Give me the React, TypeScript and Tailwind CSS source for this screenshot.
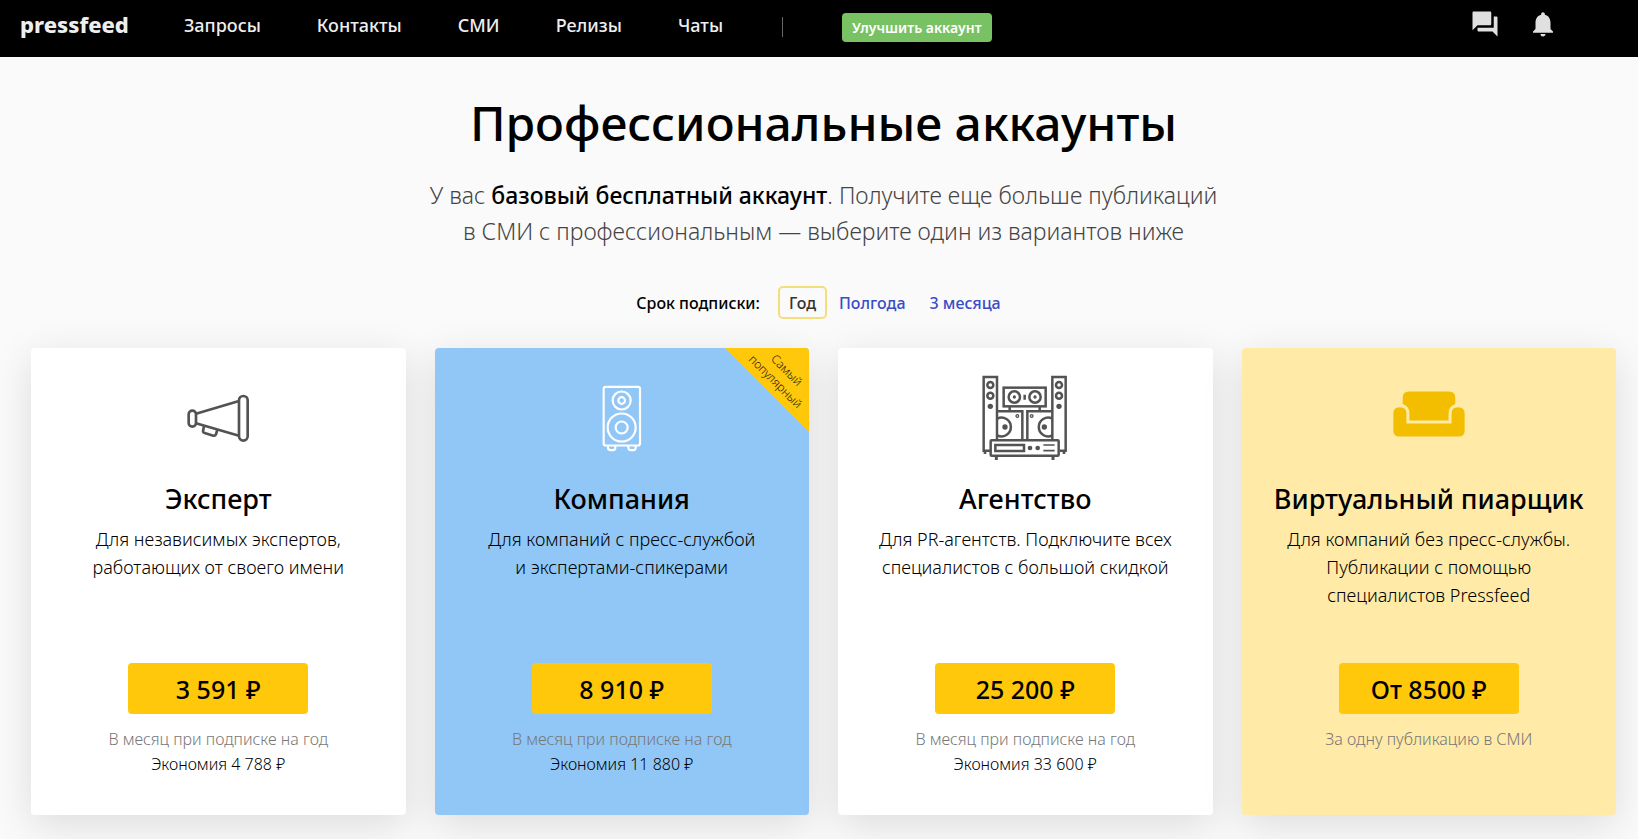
import type { ReactNode } from 'react';
import { MdForum, MdNotifications } from 'react-icons/md';

const navItems = ['Запросы', 'Контакты', 'СМИ', 'Релизы', 'Чаты'];

function MegaphoneIcon() {
  return (
    <svg viewBox="55 72 189 147" className="h-[49px] w-[63px]" fill="none" stroke="#535254" strokeWidth="8" strokeLinejoin="round" aria-hidden="true">
      <rect x="211" y="78" width="26" height="134" rx="13" />
      <rect x="60" y="122" width="22" height="48" rx="11" />
      <path d="M82 131 L211 93 M82 160 L211 197" />
      <path d="M106 168 L103 184 Q103 188 108 189 L134 197 Q140 198 142 193 L146 179" />
    </svg>
  );
}

function SpeakerIcon() {
  return (
    <svg viewBox="519 139 120 200" className="h-[67px] w-[40px]" fill="none" stroke="#ffffff" strokeWidth="6.5" aria-hidden="true">
      <rect x="524" y="144" width="109" height="176" rx="6" />
      <circle cx="578" cy="185" r="27" />
      <circle cx="578" cy="185" r="10" />
      <circle cx="578" cy="266" r="42" />
      <circle cx="578" cy="266" r="18" />
      <path d="M537 321 V326 Q537 334 545 334 H552 Q559 334 559 326 V321 M598 321 V326 Q598 334 606 334 H613 Q620 334 620 326 V321" />
    </svg>
  );
}

function StereoIcon() {
  return (
    <svg viewBox="37 33 258 258" className="h-[86px] w-[86px]" fill="none" stroke="#535254" strokeWidth="7.5" aria-hidden="true">
      <path d="M62 260 H42 V39 H82 V228 M270 260 H288 V39 H248 V228" />
      <path d="M46 262 V270 M283 262 V270" strokeWidth="8" />
      <circle cx="62" cy="63" r="9" />
      <circle cx="62" cy="95" r="9" />
      <circle cx="268" cy="63" r="9" />
      <circle cx="268" cy="95" r="9" />
      <rect x="102" y="71" width="126" height="56" />
      <circle cx="134" cy="99" r="17" />
      <circle cx="196" cy="99" r="17" />
      <path d="M165 92 V107 M120 128 V140 M210 128 V140" />
      <path d="M83 142 H158 V227 M248 142 H173 V227" />
      <path d="M83 164 A28 28 0 1 1 83 214 M248 164 A28 28 0 1 0 248 214" />
      <circle cx="143" cy="156" r="4" strokeWidth="4" />
      <circle cx="186" cy="156" r="4" strokeWidth="4" />
      <rect x="63" y="229" width="204" height="46" rx="3" />
      <rect x="77" y="243" width="86" height="18" />
      <path d="M221 243 H255 M221 260 H255" strokeWidth="5" />
      <path d="M80 277 V288 M250 277 V288" strokeWidth="9" />
      <g fill="#535254" stroke="none">
        <circle cx="62" cy="127" r="8" />
        <circle cx="268" cy="127" r="8" />
        <circle cx="134" cy="99" r="5" />
        <circle cx="196" cy="99" r="5" />
        <circle cx="106" cy="189" r="8" />
        <circle cx="224" cy="189" r="8" />
        <circle cx="181" cy="252" r="7" />
        <circle cx="204" cy="252" r="7" />
      </g>
    </svg>
  );
}

function SofaIcon() {
  return (
    <svg viewBox="68 65 215 137" className="mb-2 h-[46px] w-[72px]" fill="#f3be00" aria-hidden="true">
      <path d="M116 66 H235 Q254 66 254 85 V104 Q234 111 234 131 V153 H117 V131 Q117 111 97 104 V85 Q97 66 116 66 Z" />
      <path d="M69 132 Q69 113 88 113 Q108 113 108 132 V162 H243 V132 Q243 113 262 113 Q282 113 282 132 V183 Q282 201 264 201 H87 Q69 201 69 183 Z" />
    </svg>
  );
}

interface Plan {
  name: string;
  lines: string[];
  price: string;
  note: string;
  saving?: string;
  popular?: boolean;
  background: string;
  icon: ReactNode;
}

const plans: Plan[] = [
  {
    name: 'Эксперт',
    lines: ['Для независимых экспертов,', 'работающих от своего имени'],
    price: '3 591 ₽',
    note: 'В месяц при подписке на год',
    saving: 'Экономия 4 788 ₽',
    background: 'bg-white',
    icon: <MegaphoneIcon />,
  },
  {
    name: 'Компания',
    lines: ['Для компаний с пресс-службой', 'и экспертами-спикерами'],
    price: '8 910 ₽',
    note: 'В месяц при подписке на год',
    saving: 'Экономия 11 880 ₽',
    popular: true,
    background: 'bg-[#90c7f6]',
    icon: <SpeakerIcon />,
  },
  {
    name: 'Агентство',
    lines: ['Для PR-агентств. Подключите всех', 'специалистов с большой скидкой'],
    price: '25 200 ₽',
    note: 'В месяц при подписке на год',
    saving: 'Экономия 33 600 ₽',
    background: 'bg-white',
    icon: <StereoIcon />,
  },
  {
    name: 'Виртуальный пиарщик',
    lines: ['Для компаний без пресс-службы.', 'Публикации с помощью', 'специалистов Pressfeed'],
    price: 'От 8500 ₽',
    note: 'За одну публикацию в СМИ',
    background: 'bg-[#ffeaa7]',
    icon: <SofaIcon />,
  },
];

function PlanCard({ plan }: { plan: Plan }) {
  return (
    <article className={`relative flex flex-col items-center overflow-hidden rounded text-center shadow-[0_10px_40px_rgba(0,0,0,0.12)] ${plan.background}`}>
      {plan.popular && (
        <div className="absolute top-0 right-0 size-[84px] bg-[#ffc80a] [clip-path:polygon(0_0,100%_0,100%_100%)]">
          <p className="absolute top-3 left-4 w-20 rotate-45 text-xs leading-4 font-light text-[#222]">
            Самый
            <br />
            популярный
          </p>
        </div>
      )}
      <div className="mt-[22px] flex h-24 items-center justify-center">{plan.icon}</div>
      <h2 className="mt-[13px] text-[27px] leading-10 font-medium whitespace-nowrap">{plan.name}</h2>
      <p className="mt-[6px] min-h-28 text-lg leading-7 font-light whitespace-nowrap">
        {plan.lines.map((line) => (
          <span key={line} className="block">
            {line}
          </span>
        ))}
      </p>
      <button type="button" className="mt-[26px] h-[51px] w-[180px] rounded bg-[#ffc80a] pt-[2px] text-[25px] font-medium">
        {plan.price}
      </button>
      <p className="mt-[13px] mb-[38px] min-h-[50px] text-base leading-[25px] font-light">
        <span className="block text-[#777]">{plan.note}</span>
        {plan.saving && <span className="block">{plan.saving}</span>}
      </p>
    </article>
  );
}

export default function App() {
  return (
    <div className="min-h-screen overflow-hidden bg-[#fafafa] font-['Noto_Sans','Open_Sans',sans-serif] text-black">
      <header className="flex h-[57px] items-center bg-black pr-20 pl-5 text-[#eee]">
        <a href="#home" className="mb-[10px] text-[22px] leading-8 font-extrabold">
          pressfeed
        </a>
        <nav className="ml-[55px] flex items-center gap-14 pb-[7px] text-lg leading-6 font-medium">
          {navItems.map((item) => (
            <a key={item} href="#section">
              {item}
            </a>
          ))}
        </nav>
        <span className="mb-1 ml-[59px] h-5 w-px bg-[#666]" />
        <button type="button" className="mb-[2px] ml-[59px] h-[29px] shrink-0 rounded-sm bg-[#78c264] px-[10px] text-sm leading-5 font-semibold text-white">
          Улучшить аккаунт
        </button>
        <div className="mb-[10px] ml-auto flex gap-7 text-[#e0e0e0]">
          <button type="button" aria-label="Сообщения">
            <MdForum size={30} />
          </button>
          <button type="button" aria-label="Уведомления">
            <MdNotifications size={30} />
          </button>
        </div>
      </header>
      <main className="pt-[34px] pr-[22px] pb-[23px] pl-[31px]">
        <h1 className="text-center text-5xl leading-[64px] font-medium">Профессиональные аккаунты</h1>
        <p className="mt-[22px] text-center text-[23px] leading-9 font-light text-[#444]">
          У вас <strong className="font-medium text-black">базовый бесплатный аккаунт</strong>. Получите еще больше публикаций
          <br />в СМИ с профессиональным — выберите один из вариантов ниже
        </p>
        <div className="mt-[37px] flex items-center justify-center pr-[10px] text-base leading-6 font-medium">
          <span className="mr-[18px]">Срок подписки:</span>
          <button type="button" className="h-[33px] rounded-[5px] border-2 border-[#f4de7c] px-[9px] text-[#333]">
            Год
          </button>
          <button type="button" className="ml-3 text-[#3a4cc8]">
            Полгода
          </button>
          <button type="button" className="ml-6 text-[#3a4cc8]">
            3 месяца
          </button>
        </div>
        <section className="mt-[29px] grid grid-cols-4 gap-[29px]">
          {plans.map((plan) => (
            <PlanCard key={plan.name} plan={plan} />
          ))}
        </section>
      </main>
    </div>
  );
}
